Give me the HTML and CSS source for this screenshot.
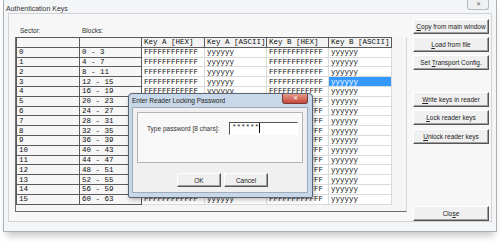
FILE: index.html
```html
<!DOCTYPE html>
<html lang="en">
  <head>
    <meta charset="UTF-8" />
    <title>Authentication Keys</title>
    <link rel="stylesheet" href="styles.css">
  </head>
  <body>
    <div class="window">
      <div class="titlebar">
        <span class="title">Authentication Keys</span>
        <span class="win-close">&#x2715;</span>
      </div>

      <div class="client">
        <div class="keys-area">
          <div class="labels">
            <span class="lbl-sector">Sector:</span>
            <span class="lbl-blocks">Blocks:</span>
          </div>
          <div class="grid-box">
            <table class="keys">
              <colgroup>
                <col style="width:63px"><col style="width:62px"><col style="width:63px">
                <col style="width:62px"><col style="width:62px"><col style="width:63px">
              </colgroup>
              <thead>
                <tr>
                  <th class="fixed"></th>
                  <th class="fixed"></th>
                  <th>Key A [HEX]</th>
                  <th>Key A [ASCII]</th>
                  <th>Key B [HEX]</th>
                  <th>Key B [ASCII]</th>
                </tr>
              </thead>
              <tbody id="rows"></tbody>
            </table>
          </div>
        </div>

        <div class="buttons">
          <button class="btn"><u>C</u>opy from main window</button>
          <button class="btn"><u>L</u>oad from file</button>
          <button class="btn">Set <u>T</u>ransport Config.</button>
          <button class="btn btn-write"><u>W</u>rite keys in reader</button>
          <button class="btn"><u>L</u>ock reader keys</button>
          <button class="btn btn-unlock"><u>U</u>nlock reader keys</button>
          <button class="btn btn-close">Clo<u>s</u>e</button>
        </div>
      </div>
    </div>

    <div class="dialog">
      <div class="dlg-title">
        <span>Enter Reader Locking Password</span>
        <span class="dlg-close">&#x2715;</span>
      </div>
      <div class="dlg-client">
        <div class="dlg-group">
          <label for="pwd">Type password [8 chars]:</label>
          <div class="pwd-box" id="pwd">******<span class="caret"></span></div>
        </div>
        <div class="dlg-actions">
          <button class="btn btn-dlg">OK</button>
          <button class="btn btn-dlg">Cancel</button>
        </div>
      </div>
    </div>

    <script>
      const tbody = document.getElementById("rows");
      let html = "";
      for (let i = 0; i < 16; i++) {
        const sel = i === 3 ? ' class="selected"' : "";
        html += `<tr>
          <td class="fixed">${i}</td>
          <td class="fixed">${i * 4} - ${i * 4 + 3}</td>
          <td>FFFFFFFFFFFF</td>
          <td>yyyyyy</td>
          <td>FFFFFFFFFFFF</td>
          <td${sel}>yyyyyy</td>
        </tr>`;
      }
      tbody.innerHTML = html;
    </script>
  </body>
</html>
```

FILE: styles.css
```css
body {
  margin: 0;
  padding: 0;
  width: 500px;
  height: 249px;
  background-color: #fff;
  font-family: "Liberation Sans", Arial, sans-serif;
  color: #222;
  position: relative;
  overflow: hidden;
}

.window {
  margin: 0 3px;
  height: 232px;
  box-sizing: border-box;
  border-left: 1px solid #a9b0b8;
  border-right: 1px solid #a9b0b8;
  border-bottom: 1px solid #a9b0b8;
  background-color: #f4f5f6;
  box-shadow: 0 7px 7px -3px rgba(0, 0, 0, 0.22);
  display: flex;
  flex-direction: column;
}

.titlebar {
  height: 16px;
  display: flex;
  align-items: flex-start;
  padding-left: 2px;
}

.title {
  font-size: 7px;
  margin-top: 5px;
  color: #333;
}

.win-close {
  margin-left: auto;
  margin-right: 7px;
  width: 20px;
  height: 9px;
  border: 1px solid #b8bcc2;
  border-top: none;
  border-radius: 0 0 3px 3px;
  background-color: #eef0f2;
  font-size: 6px;
  line-height: 9px;
  text-align: center;
  color: #666;
}

.client {
  margin: 0 4px 9px 4px;
  flex: 1;
  border: 1px solid #cfd2d6;
  background-color: #f7f7f7;
  display: flex;
}

.keys-area {
  padding-left: 6px;
  display: flex;
  flex-direction: column;
}

.labels {
  height: 23px;
  position: relative;
  font-size: 6.5px;
  color: #333;
}

.lbl-sector,
.lbl-blocks {
  position: absolute;
  top: 13px;
}

.lbl-sector {
  left: 5px;
}

.lbl-blocks {
  left: 67px;
}

.grid-box {
  width: 392px;
  height: 175px;
  box-sizing: border-box;
  border-left: 1px solid #6d6d6d;
  border-bottom: 1px solid #6d6d6d;
  border-right: 1px solid #d6d6d6;
  background-color: #f5f5f5;
}

.keys {
  border-collapse: collapse;
  table-layout: fixed;
  width: 375px;
  font-family: "Liberation Mono", "Courier New", monospace;
  font-size: 7.5px;
}

.keys tr {
  height: 9.8px;
}

.keys th,
.keys td {
  padding: 0 0 0 2px;
  text-align: left;
  white-space: nowrap;
  overflow: hidden;
  line-height: 8px;
  color: #111;
}

.keys th {
  font-weight: normal;
  border: 1px solid #5a5a5a;
  background-color: #f3f3f3;
}

.keys td {
  border: 1px solid #dadada;
  background-color: #fff;
}

.keys .fixed {
  border: 1px solid #5a5a5a;
  background-color: #f6f6f6;
}

.keys td.selected {
  background-color: #3399ff;
  color: #fff;
}

.buttons {
  margin-left: 6px;
  width: 76px;
  padding-top: 5px;
  display: flex;
  flex-direction: column;
  gap: 3px;
}

.btn {
  height: 15px;
  padding: 0;
  box-sizing: border-box;
  border: 1px solid #fff;
  border-right-color: #555;
  border-bottom-color: #555;
  background-color: #f0f0f0;
  font-family: "Liberation Sans", Arial, sans-serif;
  font-size: 6.5px;
  color: #222;
  box-shadow: inset -1px -1px 0 #a0a0a0;
}

.btn-write {
  margin-top: 19px;
}

.btn-unlock {
  margin-top: 1px;
}

.btn-close {
  margin-top: 59px;
}

.dialog {
  position: absolute;
  left: 128px;
  top: 93px;
  width: 185px;
  height: 105px;
  box-sizing: border-box;
  border: 1px solid #5b6470;
  border-radius: 4px 4px 2px 2px;
  background-color: #c9d8e8;
  padding: 0 4px 4px 3px;
  display: flex;
  flex-direction: column;
  box-shadow: 1px 2px 4px rgba(0, 0, 0, 0.25);
}

.dlg-title {
  height: 13px;
  display: flex;
  align-items: flex-start;
  font-size: 6.5px;
  color: #222;
}

.dlg-title span:first-child {
  margin-top: 3px;
}

.dlg-close {
  margin-left: auto;
  width: 24px;
  height: 9px;
  border: 1px solid #7a3a3a;
  border-top: none;
  border-radius: 0 0 3px 3px;
  background: linear-gradient(#e39a8a, #c8483a);
  color: #fff;
  font-size: 6px;
  line-height: 9px;
  text-align: center;
}

.dlg-client {
  flex: 1;
  border: 1px solid #9eabb8;
  background-color: #f0f0f0;
  padding: 4px 4px 0 4px;
}

.dlg-group {
  height: 51px;
  box-sizing: border-box;
  border: 1px solid #b4b4b4;
  background-color: #f8f8f8;
  display: flex;
  align-items: flex-start;
  padding: 9px 0 0 9px;
}

.dlg-group label {
  font-size: 6.5px;
  color: #333;
  margin-top: 3px;
  width: 82px;
}

.pwd-box {
  width: 69px;
  height: 13px;
  box-sizing: border-box;
  border: 1px solid #fff;
  border-top-color: #555;
  border-left-color: #555;
  background-color: #fff;
  font-family: "Liberation Mono", monospace;
  font-size: 7.5px;
  line-height: 9px;
  padding-left: 2px;
  display: flex;
  align-items: flex-start;
}

.caret {
  width: 1px;
  height: 10px;
  background-color: #000;
}

.dlg-actions {
  display: flex;
  gap: 3px;
  padding-left: 40px;
  margin-top: 10px;
}

.btn-dlg {
  width: 44px;
  height: 14px;
}
```
